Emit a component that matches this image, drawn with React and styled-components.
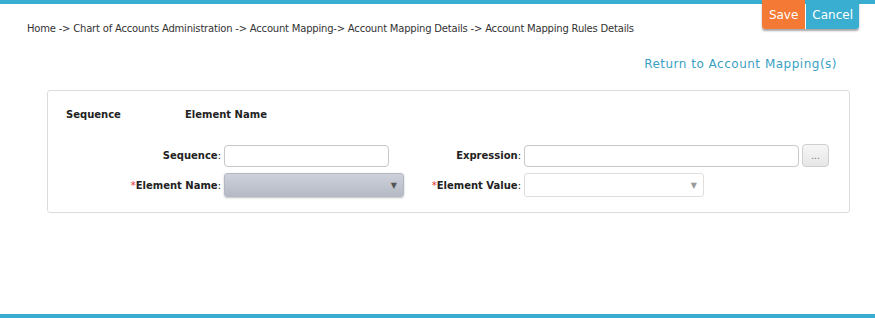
import React from "react";
import styled, { createGlobalStyle } from "styled-components";

const GlobalStyle = createGlobalStyle`
  body {
    margin: 0;
    font-family: "DejaVu Sans", Verdana, sans-serif;
    background: #ffffff;
    color: #333;
  }
`;

const Page = styled.div`
  position: relative;
  display: flex;
  flex-direction: column;
  height: 100vh;
  border-top: 4px solid #3aaed0;
  box-sizing: border-box;
`;

const ButtonGroup = styled.div`
  position: absolute;
  top: -4px;
  right: 16px;
  display: flex;
  gap: 1px;
  box-shadow: 0 2px 2px rgba(0, 0, 0, 0.35);
  border-radius: 0 0 3px 3px;
`;

const ActionButton = styled.button`
  border: none;
  height: 29px;
  padding: 0 ${(p) => (p.$primary ? 7 : 6)}px;
  font-family: "DejaVu Sans", Verdana, sans-serif;
  font-size: 12px;
  color: #fff;
  background: ${(p) => (p.$primary ? "#f37934" : "#3aaed0")};
  border-radius: ${(p) => (p.$primary ? "0 0 0 3px" : "0 0 3px 0")};
  cursor: pointer;
`;

const Breadcrumb = styled.div`
  padding: 19px 0 0 27px;
  font-size: 10px;
  color: #333;
  letter-spacing: -0.2px;
`;

const ReturnRow = styled.div`
  display: flex;
  justify-content: flex-end;
  padding: 23px 38px 0 0;
`;

const ReturnLink = styled.a`
  font-size: 12px;
  color: #3a9fc3;
  letter-spacing: 0.5px;
  text-decoration: none;
  cursor: pointer;
`;

const Panel = styled.div`
  margin: 19px 25px 0 47px;
  border: 1px solid #dcdcdc;
  border-radius: 3px;
  padding: 18px 0 15px 0;
`;

const HeaderRow = styled.div`
  display: flex;
  padding-left: 18px;
  font-size: 10px;
  font-weight: bold;
  color: #222;
`;

const HeaderCell = styled.div`
  width: ${(p) => p.$w}px;
`;

const FormGrid = styled.div`
  display: grid;
  grid-template-columns: 172px 165px 127px 275px 30px;
  column-gap: 4px;
  row-gap: 6px;
  margin-top: 24px;
  align-items: center;
`;

const Label = styled.label`
  text-align: right;
  font-size: 10px;
  font-weight: bold;
  color: #222;
  margin-right: -1px;
  span {
    color: #e03030;
    font-weight: normal;
  }
  i {
    font-style: normal;
    font-weight: normal;
  }
`;

const TextInput = styled.input`
  box-sizing: border-box;
  height: 22px;
  width: 100%;
  border: 1px solid #c8c8c8;
  border-radius: 4px;
  background: #fff;
`;

const Select = styled.div`
  box-sizing: border-box;
  height: 24px;
  width: ${(p) => p.$w}px;
  border: 1px solid ${(p) => (p.$filled ? "#b3b8c2" : "#dedede")};
  border-radius: 3px;
  background: ${(p) =>
    p.$filled ? "linear-gradient(#cdd1da, #b5bac5)" : "#fff"};
  box-shadow: ${(p) => (p.$filled ? "0 1px 2px rgba(0,0,0,0.25)" : "none")};
  display: flex;
  justify-content: flex-end;
  align-items: center;
  padding-right: 6px;
  font-size: 8px;
  color: ${(p) => (p.$filled ? "#555" : "#999")};
`;

const DotsButton = styled.button`
  box-sizing: border-box;
  width: 27px;
  height: 23px;
  margin-left: -1px;
  border: 1px solid #cfcfcf;
  border-radius: 4px;
  background: linear-gradient(#f6f6f6, #e6e6e6);
  font-size: 10px;
  color: #777;
  padding: 0;
  line-height: 1;
`;

const BottomBar = styled.div`
  margin-top: auto;
  height: 4px;
  background: #3aaed0;
`;

export default function App() {
  return (
    <Page>
      <GlobalStyle />
      <ButtonGroup>
        <ActionButton $primary>Save</ActionButton>
        <ActionButton>Cancel</ActionButton>
      </ButtonGroup>
      <Breadcrumb>
        Home -&gt; Chart of Accounts Administration -&gt; Account Mapping-&gt; Account
        Mapping Details -&gt; Account Mapping Rules Details
      </Breadcrumb>
      <ReturnRow>
        <ReturnLink>Return to Account Mapping(s)</ReturnLink>
      </ReturnRow>
      <Panel>
        <HeaderRow>
          <HeaderCell $w={119}>Sequence</HeaderCell>
          <HeaderCell $w={200}>Element Name</HeaderCell>
        </HeaderRow>
        <FormGrid>
          <Label>
            Sequence<i>:</i>
          </Label>
          <TextInput type="text" />
          <Label>
            Expression<i>:</i>
          </Label>
          <TextInput type="text" />
          <DotsButton>...</DotsButton>

          <Label>
            <span>*</span>Element Name<i>:</i>
          </Label>
          <Select $filled $w={180}>▼</Select>
          <Label>
            <span>*</span>Element Value<i>:</i>
          </Label>
          <Select $w={180}>▼</Select>
          <div />
        </FormGrid>
      </Panel>
      <BottomBar />
    </Page>
  );
}
